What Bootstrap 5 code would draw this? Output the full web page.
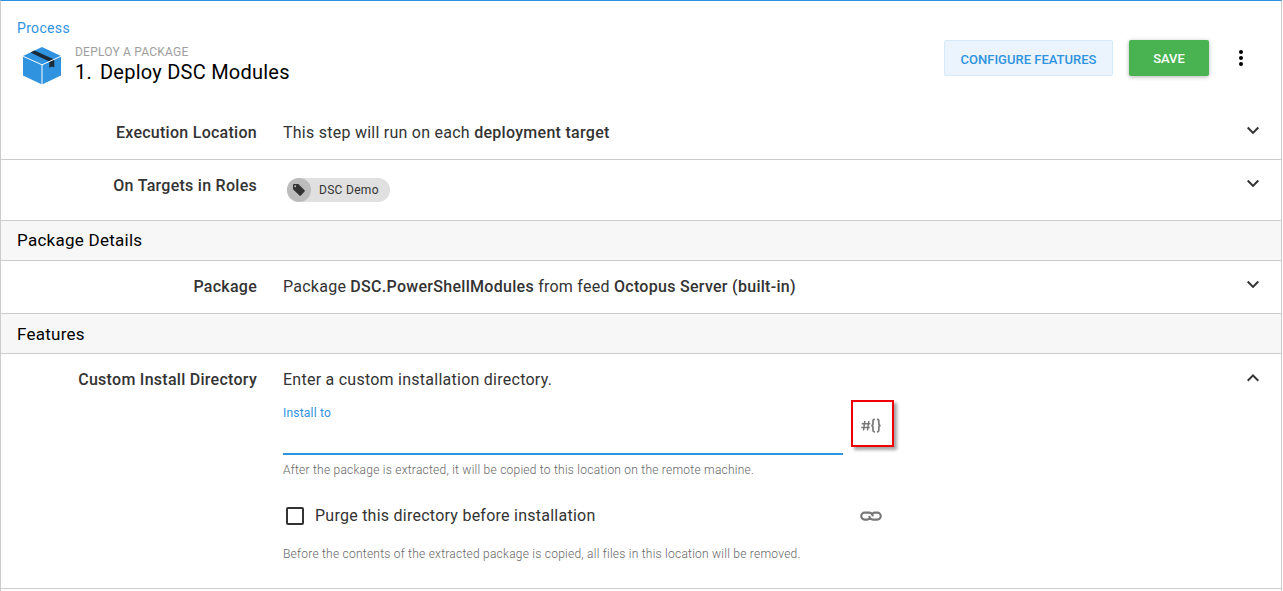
<!DOCTYPE html>
<html lang="en">
<head>
<meta charset="utf-8">
<title>Deploy DSC Modules</title>
<meta name="viewport" content="width=device-width, initial-scale=1">
<link href="https://cdn.jsdelivr.net/npm/bootstrap@5.3.0/dist/css/bootstrap.min.css" rel="stylesheet">
<style>
body{font-family:Roboto,"Liberation Sans",sans-serif;font-size:16px;line-height:24px;color:#333;background:#fff;letter-spacing:.25px;height:591px;overflow:hidden}
b{font-weight:500;letter-spacing:.29px}
svg{display:block;flex:none}
.panel{width:1282px;height:591px;border:1px solid #ccc;border-width:0 1px;border-top:1px solid #2f93e0}
.step-head{height:104px;padding:15px 32px 0 16px}
.crumb{font-size:14px;color:#2f93e0;line-height:24px;text-decoration:none;letter-spacing:.33px}
.kind{font-size:12px;line-height:14px;color:#9e9e9e;letter-spacing:.22px;margin-top:5px}
.step-title{font-size:20px;line-height:26px;color:#000;font-weight:400;letter-spacing:.24px;margin:0}
.step-title span{margin-right:8px}
.btn-flat{width:169px;height:36px;padding:3px 0 0;font-size:13px;font-weight:500;border-radius:2px;letter-spacing:0}
.btn-config{color:#2f93e0;background:#ebf4fc;border:1px solid #d5e9f9}
.btn-go{width:80px;color:#fff;background:#48b350;border:0;padding:1px 0 0;box-shadow:0 1px 4px rgba(0,0,0,.3)}
.setting{border-bottom:1px solid #ccc;padding:0 16px 0 0}
.setting-name{width:256px;margin-right:26px;text-align:right;font-weight:500;letter-spacing:.27px}
.section-bar{height:40px;line-height:39px;background:#f7f7f7;border-bottom:1px solid #ccc;padding-left:16px;color:#000;font-size:17px;letter-spacing:.26px}
.role-chip{width:103px;height:24px;border-radius:12px;background:#e0e0e0;font-size:12px;letter-spacing:.3px;margin:4px}
.role-dot{width:24px;height:24px;border-radius:50%;background:#bcbcbc;margin-right:8px}
.chevron{margin-top:14px}
.field{width:560px}
.field-label{font-size:12px;line-height:16px;color:#2f93e0;letter-spacing:.2px;padding-top:5px}
.field-input{height:34px;border:0;border-bottom:2px solid #2f93e0;border-radius:0;padding:0;width:100%;display:block;outline:0}
.hint{font-size:12px;line-height:16px;color:#666;font-weight:300;letter-spacing:.24px}
.box{width:18px;height:18px;border:2px solid #333;border-radius:2px;margin:0 11px 0 3px;appearance:none}
.callout{width:43px;height:47px;border:2px solid #f00000;box-shadow:3px 3px 3px rgba(0,0,0,.35);margin-left:8px}
</style>
</head>
<body>
<main class="panel">
  <header class="step-head d-flex justify-content-between">
    <div>
      <a class="crumb d-block" href="#">Process</a>
      <div class="d-flex">
        <svg class="ms-1 mt-1" width="42" height="42" viewBox="0 0 42 42">
          <path fill="#2f93e0" d="M21 3 40 12V31.500L21 40.500 2 31.500V12Z"/>
          <path fill="#1b2a38" d="M13.500 6.500 33.300 15.500V23.500L31 22.500 28.300 23.800V17.500L9.500 8.500Z"/>
          <path fill="none" stroke="#fff" stroke-width="1" d="M1.500 12 21 20.800 40.500 12M21 20.800V41"/>
        </svg>
        <div class="ms-2 ps-1">
          <div class="kind">DEPLOY A PACKAGE</div>
          <h1 class="step-title"><span>1.</span>Deploy DSC Modules</h1>
        </div>
      </div>
    </div>
    <div class="d-flex mt-4">
      <button class="btn btn-flat btn-config me-3">CONFIGURE FEATURES</button>
      <button class="btn btn-flat btn-go">SAVE</button>
      <svg class="ms-4" width="16" height="36" viewBox="0 0 16 36"><g fill="#000"><circle cx="8" cy="12" r="2"/><circle cx="8" cy="18" r="2"/><circle cx="8" cy="24" r="2"/></g></svg>
    </div>
  </header>

  <section class="setting d-flex" style="height:55px">
    <div class="setting-name pt-3">Execution Location</div>
    <div class="flex-grow-1 pt-3">This step will run on each <b>deployment target</b></div>
    <svg class="chevron" width="24" height="24" viewBox="0 0 24 24"><path id="chev" fill="#333" d="M7.410 7.840 12 12.420 16.590 7.840 18 9.250 12 15.250 6 9.250Z"/></svg>
  </section>
  <section class="setting d-flex" style="height:61px">
    <div class="setting-name" style="padding-top:14px">On Targets in Roles</div>
    <div class="flex-grow-1" style="padding-top:14px">
      <div class="role-chip d-flex align-items-center">
        <span class="role-dot d-flex align-items-center justify-content-center">
          <svg width="14" height="14" viewBox="0 0 14 14"><path fill="#333" fill-rule="evenodd" d="M2 1H6.300L12.600 7.200Q13.200 7.900 12.600 8.600L8.900 12.600Q8.200 13.200 7.500 12.500L1 6.300V2Q1 1 2 1ZM3.200 2.300A.9 .9 0 1 0 3.210 2.300Z"/></svg>
        </span>DSC Demo
      </div>
    </div>
    <svg style="margin-top:12px" width="24" height="24" viewBox="0 0 24 24"><use href="#chev"/></svg>
  </section>
  <div class="section-bar">Package Details</div>
  <section class="setting d-flex" style="height:53px">
    <div class="setting-name" style="padding-top:14px">Package</div>
    <div class="flex-grow-1" style="padding-top:14px">Package <b>DSC.PowerShellModules</b> from feed <b>Octopus Server (built-in)</b></div>
    <svg style="margin-top:12px" width="24" height="24" viewBox="0 0 24 24"><use href="#chev"/></svg>
  </section>
  <div class="section-bar" style="line-height:41px">Features</div>
  <section class="setting d-flex" style="height:235px">
    <div class="setting-name" style="padding-top:14px">Custom Install Directory</div>
    <div class="flex-grow-1" style="padding-top:14px">
      <div>Enter a custom installation directory.</div>
      <div class="d-flex" style="height:65px;padding-top:8px">
        <div class="field">
          <label class="field-label d-block" for="dir">Install to</label>
          <input class="field-input" id="dir" type="text">
        </div>
        <div class="callout">
          <svg style="margin:15px 0 0 8px" width="22" height="18" viewBox="0 0 22 18"><g fill="none" stroke="#777" stroke-width="1.500"><path d="M3.800 4 2.500 13.500M7.800 4 6.500 13.500M.8 6.700H9.300M.3 10.600H8.800"/><path stroke-width="1.700" d="M13.900 2.300H13.400Q12 2.300 12 3.800V6.500Q12 8.600 10.200 8.600Q12 8.600 12 10.700V13.300Q12 14.800 13.400 14.800H13.900M15.900 2.300H16.400Q17.800 2.300 17.800 3.800V6.500Q17.800 8.600 19.600 8.600Q17.800 8.600 17.800 10.700V13.300Q17.800 14.800 16.400 14.800H15.900"/></g></svg>
        </div>
      </div>
      <div class="hint" style="padding-top:5px">After the package is extracted, it will be copied to this location on the remote machine.</div>
      <div class="d-flex align-items-center" style="margin-top:26px">
        <div class="field d-flex align-items-center"><input class="box" type="checkbox" id="purge"><label for="purge">Purge this directory before installation</label></div>
        <svg style="margin-left:16px" width="24" height="24" viewBox="0 0 24 24"><g fill="none" stroke="#777" stroke-width="2.100"><path d="M10.500 14.500Q9.500 15.600 8 15.600H5.700A3.500 3.500 0 0 1 5.700 8.600H10Q13.300 8.600 13.800 12.300M13.500 9.700Q14.500 8.600 16 8.600H18.300A3.500 3.500 0 0 1 18.300 15.600H14Q10.700 15.600 10.200 11.900"/></g></svg>
      </div>
      <div class="hint" style="margin-top:18px">Before the contents of the extracted package is copied, all files in this location will be removed.</div>
    </div>
    <svg style="margin-top:12px" width="24" height="24" viewBox="0 0 24 24"><path fill="#333" d="M7.410 15.410 12 10.830 16.590 15.410 18 14 12 8 6 14Z"/></svg>
  </section>
</main>
<script src="https://cdn.jsdelivr.net/npm/bootstrap@5.3.0/dist/js/bootstrap.bundle.min.js"></script>
</body>
</html>
